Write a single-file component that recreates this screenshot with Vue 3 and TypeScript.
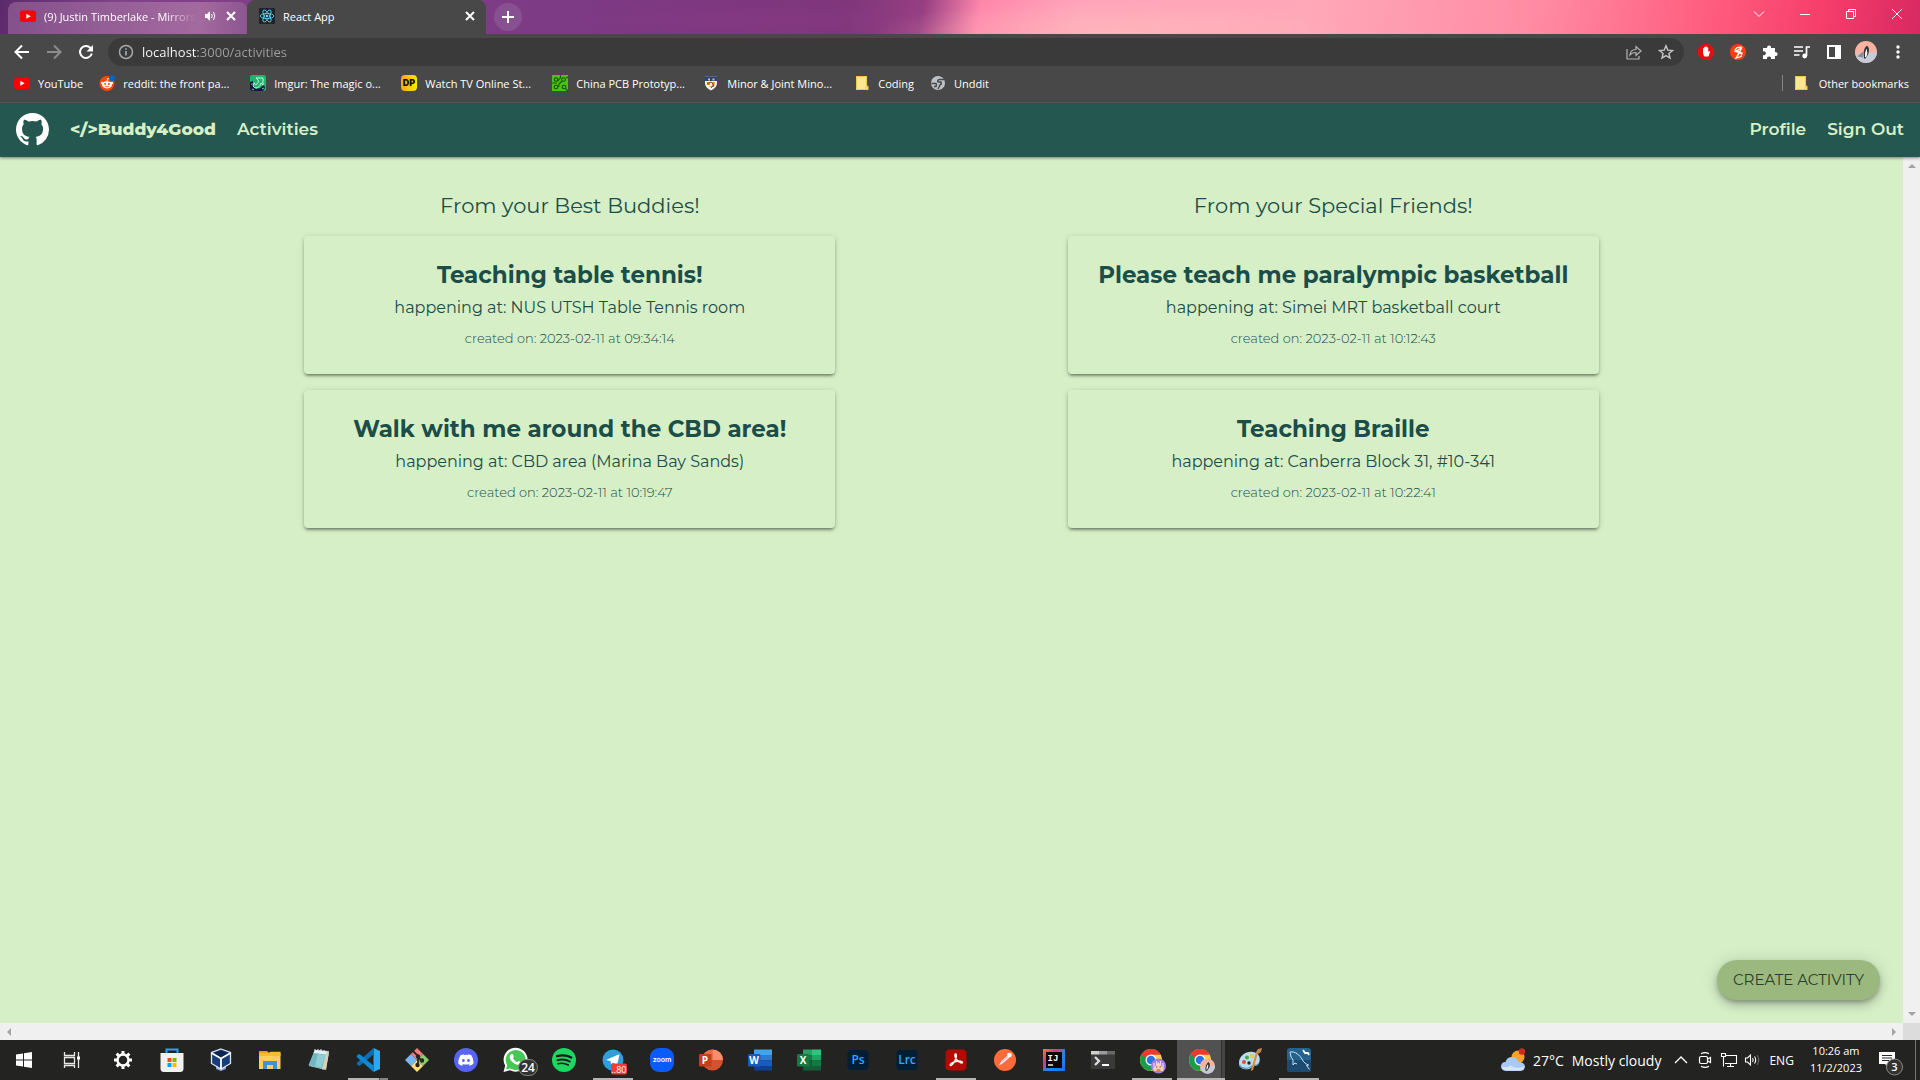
<script setup lang="ts">
interface Bookmark { name: string; art: string }
interface Activity { title: string; place: string; created: string }
interface Feed { heading: string; items: Activity[] }
interface TaskApp { name: string; art: string; state?: 'open' | 'stacked' | 'active' }

const youtube =
  '<rect x="0" y="2.5" width="16" height="11.5" rx="2.5" fill="#f00"/><path d="M6.3 5.7v5l4.4-2.5z" fill="#fff"/>'
const folder =
  '<path d="M2 1h11v10.500h1V15H2z" fill="#ffe591"/><path d="M2 1.500h10.500v10M2.500 1v13.500h11.500M12 14v-3h2v4" fill="none" stroke="#efc94e" stroke-width="1"/>'

const bookmarks: Bookmark[] = [
  { name: 'YouTube', art: youtube },
  {
    name: 'reddit: the front pa...',
    art: '<circle cx="8" cy="8.500" r="7.500" fill="#ff4500"/><ellipse cx="8" cy="9.800" rx="5" ry="3.600" fill="#fff"/><circle cx="3.200" cy="8" r="1.300" fill="#fff"/><circle cx="12.800" cy="8" r="1.300" fill="#fff"/><path d="M8 6.500l.7-3 2.500.6" stroke="#fff" fill="none"/><circle cx="6.100" cy="9" r="1" fill="#ff4500"/><circle cx="9.900" cy="9" r="1" fill="#ff4500"/><path d="M6 11.300q2 1.400 4 0" stroke="#ff4500" fill="none" stroke-width=".8"/><circle cx="13" cy="3" r="3" fill="#0a63c0"/>'
  },
  {
    name: 'Imgur: The magic o...',
    art: '<rect width="16" height="16" rx="2.500" fill="#1bb76e"/><path d="M0 7l3-1v5l3 3 4-1 4-3 1 3-2 3H2.500Q0 16 0 13.500z" fill="#171544"/><path d="M6 3h7v7l-2-2c-1 4-4 5.500-6.500 4.500-2-1-1.500-4 0-4.500 0 2 1.500 2 2.500 1 1-1 1.300-2 1.300-3.700z" fill="#1bb76e" stroke="#d8fff0" stroke-width=".9"/><path d="M1 9.500l1.500-1M2 14l2 1M12 14l2-1" stroke="#d8fff0" stroke-width=".7"/>'
  },
  {
    name: 'Watch TV Online St...',
    art: '<defs><linearGradient id="dp" x1="0" x2="1"><stop stop-color="#fba421"/><stop offset="1" stop-color="#ffea00"/></linearGradient></defs><rect width="16" height="16" rx="4" fill="url(#dp)"/><text x="8" y="11.300" font-family="Inter, sans-serif" font-size="9" font-weight="900" text-anchor="middle" fill="#111">DP</text>'
  },
  {
    name: 'China PCB Prototyp...',
    art: '<rect width="16" height="16" fill="#4cc20a"/><g fill="none" stroke="#14541a" stroke-width="1.100"><circle cx="4" cy="4.500" r="1.800"/><circle cx="11.500" cy="4.500" r="1.800"/><circle cx="4" cy="12" r="1.800"/><circle cx="12" cy="12" r="1.800"/><path d="M5.500 6.500l3-4V0M10 6L7 9v2l-2 1M13.500 13.500L16 16M14 3l2-1M0 8h5"/></g>'
  },
  {
    name: 'Minor & Joint Mino...',
    art: '<path d="M2 1l2 1 2-1 2 1 2-1 2 1 2-1v7q0 5-6 7.500Q2 13 2 8z" fill="#eef1f6"/><path d="M2 1l2 1 2-1 2 1 2-1 2 1 2-1v5H2z" fill="#24457f"/><path d="M5 3.500h2v2H5zM9.500 3.500h2v2h-2z" fill="#f5b56a"/><path d="M4 7h3v3H4zM9 7h3l-1 5H9zM6 11h3v2z" fill="#ea8b2b"/><path d="M4 9l4-2 3 3-3 3" fill="none" stroke="#4b4b55" stroke-width=".9"/>'
  },
  { name: 'Coding', art: folder },
  {
    name: 'Unddit',
    art: '<circle cx="8" cy="8" r="7" fill="#bdc1c6"/><path d="M14 4.500H9.500Q7 5 8 7h3q1 2-1 3l-2 4M1.500 8.500H6q1 1 0 3H4" fill="none" stroke="#484848" stroke-width="1.500"/>'
  }
]

const feeds: Feed[] = [
  {
    heading: 'From your Best Buddies!',
    items: [
      { title: 'Teaching table tennis!', place: 'NUS UTSH Table Tennis room', created: '2023-02-11 at 09:34:14' },
      { title: 'Walk with me around the CBD area!', place: 'CBD area (Marina Bay Sands)', created: '2023-02-11 at 10:19:47' }
    ]
  },
  {
    heading: 'From your Special Friends!',
    items: [
      { title: 'Please teach me paralympic basketball', place: 'Simei MRT basketball court', created: '2023-02-11 at 10:12:43' },
      { title: 'Teaching Braille', place: 'Canberra Block 31, #10-341', created: '2023-02-11 at 10:22:41' }
    ]
  }
]

const chrome =
  '<circle cx="11" cy="12" r="11" fill="#fdd23c"/><path d="M11 12L1.500 6.500A11 11 0 0 1 20.500 6.500H11z" fill="#ea3b2e"/><path d="M1.500 6.500A11 11 0 0 0 11 23l5-8.500-5-2.500z" fill="#1e9a48"/><path d="M1.500 6.500L6.500 15l4-3V6.500L6 4z" fill="#1e9a48"/><path d="M1.500 6.500A11 11 0 0 1 20.500 6.500H11Q7 6.500 6 10z" fill="#ea3b2e"/><circle cx="11" cy="12" r="5.500" fill="#fff"/><circle cx="11" cy="12" r="4.300" fill="#2b74e8"/>'
const adobe = (label: string) =>
  `<rect x="1.500" y="2" width="21" height="20" rx="4" fill="#001e36"/><text x="12" y="16" text-anchor="middle" font-family="Open Sans, sans-serif" font-size="12" font-weight="600" fill="#31a8ff">${label}</text>`

const apps: TaskApp[] = [
  {
    name: 'Settings',
    art: '<g stroke="#fff" fill="none"><circle cx="12" cy="12" r="5.500" stroke-width="2.500"/><path stroke-width="3" d="M12 3v3M12 18v3M3 12h3M18 12h3M5.600 5.600l2.200 2.200M16.200 16.200l2.200 2.200M5.600 18.400l2.200-2.200M16.200 7.800l2.200-2.200"/></g>'
  },
  {
    name: 'Microsoft Store',
    art: '<path d="M6.500 6V1.500h11V6" fill="none" stroke="#22a6f2" stroke-width="2"/><path d="M.5 5h23v15.500q0 3.500-3.500 3.500H4Q.5 24 .5 20.500z" fill="#f1f1f1"/><path d="M7.500 10h4v4h-4z" fill="#f25022"/><path d="M12.500 10h4v4h-4z" fill="#7fba00"/><path d="M7.500 15h4v4h-4z" fill="#00a4ef"/><path d="M12.500 15h4v4h-4z" fill="#ffb900"/>'
  },
  {
    name: 'VirtualBox',
    art: '<path d="M7 17l5 3 5-3v4l-5 2-5-2z" fill="#8ea5cc"/><path d="M12 1l9.500 3.500v11L12 21l-9.500-5.500v-11z" fill="#173d7b" stroke="#dce5f5" stroke-width="1.300"/><path d="M12 2.500l8 3-8 4.500-8-4.500z" fill="#0d2450"/><path d="M2.500 5l9.500 5.500L21.500 5M12 10.500V21" stroke="#fff" stroke-width="1.800" fill="none"/>'
  },
  {
    name: 'File Explorer',
    art: '<path d="M1 3h8l2 2H1z" fill="#e3a200"/><path d="M1 5h21.500v16H1z" fill="#ffcf5c"/><path d="M1 4.800h10l1.500-1h10V8H1z" fill="#f9b932"/><path d="M5 21v-8h14v8h-4v-4H9v4z" fill="#3b93dd"/>'
  },
  {
    name: 'Notepad',
    art: '<path d="M8 2l14 1-3 19-17-4z" fill="#c1ccd0"/><path d="M7.500 2.500L20 4l-5 17L1.500 17z" fill="#6fb6c2"/><path d="M8 2l12 1.500-1 3L6.500 5z" fill="#e2f3f3"/><path d="M20 3l2 2-3 16-4 .5z" fill="#d9d0b5"/><path d="M11 6l8 1-5 13-6-2z" fill="#a8dce1" opacity=".6"/><path d="M8 1v3m3-3v3m3-3v3m3-2v3" stroke="#eee"/>'
  },
  {
    name: 'Visual Studio Code',
    state: 'stacked',
    art: '<path d="M17.500 0L24 3v18l-6.500 3z" fill="#2aa8f2"/><path d="M17.500 0v6.500L3.500 18 1 16.500 .8 15z" fill="#0a6fb5"/><path d="M17.500 24v-6.500L3.500 6 .8 7.500V9z" fill="#0d89d3"/>'
  },
  {
    name: 'Git',
    art: '<path d="M12 0l6 6-6 6-6-6z" fill="#f27c7a"/><path d="M18 6l6 6-6 6-6-6z" fill="#89ce6c"/><path d="M6 6l6 6-6 6-6-6z" fill="#79b6f4"/><path d="M12 12l6 6-6 6-6-6z" fill="#ffe07a"/><g stroke="#252525" stroke-width="1.800" fill="#252525"><path d="M8 3l5 5v9M13 9l4 4" fill="none"/><circle cx="13" cy="8.500" r="1.300"/><circle cx="17" cy="12.500" r="1.300"/><circle cx="12.500" cy="17" r="1.300"/></g>'
  },
  {
    name: 'Discord',
    art: '<circle cx="12" cy="12" r="12" fill="#5865f2"/><path transform="translate(4.300 4.300) scale(.64)" fill="#fff" d="M20.317 4.370a19.800 19.800 0 0 0-4.885-1.515c-.21.375-.45.88-.617 1.275a18.300 18.300 0 0 0-5.487 0c-.16-.39-.4-.9-.617-1.275a19.700 19.700 0 0 0-4.885 1.515C.533 9.046-.32 13.580.1 18.058a19.900 19.900 0 0 0 5.993 3.030c.46-.63.87-1.300 1.226-1.994a13 13 0 0 1-1.872-.892l.37-.29c3.930 1.793 8.180 1.793 12.060 0l.37.29c-.6.350-1.220.645-1.873.892.360.7.770 1.362 1.225 1.993a19.800 19.800 0 0 0 6.002-3.030c.5-5.177-.838-9.674-3.549-13.660zM8.020 15.330c-1.183 0-2.157-1.085-2.157-2.420 0-1.330.955-2.420 2.157-2.420 1.210 0 2.176 1.100 2.157 2.420 0 1.335-.956 2.420-2.157 2.420zm7.975 0c-1.183 0-2.157-1.085-2.157-2.420 0-1.330.955-2.420 2.157-2.420 1.210 0 2.176 1.100 2.157 2.420 0 1.335-.946 2.420-2.157 2.420z"/>'
  },
  {
    name: 'WhatsApp',
    art: '<path d="M.5 24l1.700-6.300A12 12 0 1 1 7 22.300z" fill="#fff"/><path d="M3 21.500l1.200-4.300A10 10 0 1 1 7.300 20.400z" fill="#47c855"/><path d="M8 6c1-.6 1.700-.3 2 .5l.8 2c.2.600-1 1.300-.8 1.700 1 2 2.300 3 4 3.800.6.200 1-1.300 1.700-1l2 1c.8.400.3 2-.6 2.500-3 1.500-9-2-10.300-6.500C6.300 8.300 7 6.800 8 6z" fill="#fff"/><rect x="15.500" y="11.500" width="19" height="16" rx="8" fill="#333" stroke="#888"/><text x="25" y="23.500" text-anchor="middle" font-family="Open Sans, sans-serif" font-size="12" font-weight="600" fill="#fff">24</text>'
  },
  {
    name: 'Spotify',
    art: '<circle cx="12" cy="12" r="12" fill="#1ed760"/><g fill="none" stroke="#1b1b1b" stroke-linecap="round"><path d="M5 8.200q8-2.200 14.300 1.300" stroke-width="2.300"/><path d="M5.500 12.200q6.500-1.800 12.300 1.300" stroke-width="1.900"/><path d="M6 15.800q5.500-1.400 10.300 1.200" stroke-width="1.600"/></g>'
  },
  {
    name: 'Telegram',
    state: 'open',
    art: '<circle cx="12" cy="12" r="10.500" fill="#2ba0dc"/><path d="M5 12l12.500-5.500c.8-.2 1 .3.800 1L16 17.500l-4-3-2 2-.5-3.500z" fill="#fff"/><rect x="10" y="15.500" width="16" height="11" rx="2" fill="#f23c34"/><text x="18" y="24.500" text-anchor="middle" font-family="Open Sans, sans-serif" font-size="9" fill="#fff">..80</text>'
  },
  {
    name: 'Zoom',
    art: '<rect width="24" height="24" rx="9" fill="#0b5cff"/><text x="12" y="14" text-anchor="middle" font-family="Inter, sans-serif" font-size="7" font-weight="600" fill="#fff">zoom</text>'
  },
  {
    name: 'PowerPoint',
    art: '<circle cx="13.500" cy="12" r="10.500" fill="#d35230"/><path d="M13.500 1.500A10.500 10.500 0 0 1 24 12H13.500z" fill="#ff8f6b"/><path d="M13.500 1.500A10.500 10.500 0 0 0 3 12h10.500z" fill="#ed6c47"/><rect y="6" width="12.500" height="12.500" rx="1.200" fill="#c43e1c"/><text x="6" y="16" text-anchor="middle" font-family="Open Sans, sans-serif" font-size="10" font-weight="700" fill="#fff">P</text>'
  },
  {
    name: 'Word',
    art: '<path d="M6 1.500h18V7H6z" fill="#41a5ee"/><path d="M6 7h18v5.500H6z" fill="#2b7cd3"/><path d="M6 12.500h18V18H6z" fill="#185abd"/><path d="M6 18h18v4.500H6z" fill="#103f91"/><rect y="6" width="12.500" height="12.500" rx="1.200" fill="#185abd"/><text x="6" y="16" text-anchor="middle" font-family="Open Sans, sans-serif" font-size="10" font-weight="700" fill="#fff">W</text>'
  },
  {
    name: 'Excel',
    art: '<path d="M6 1.500h9V7H6zM15 7h9v5.500h-9z" fill="#21a366"/><path d="M15 1.500h9V7h-9z" fill="#33c481"/><path d="M6 7h9v5.500H6zM15 12.500h9V18h-9z" fill="#107c41"/><path d="M6 12.500h9V18h9v4.500H6z" fill="#185c37"/><rect y="6" width="12.500" height="12.500" rx="1.200" fill="#107c41"/><text x="6" y="16" text-anchor="middle" font-family="Open Sans, sans-serif" font-size="10" font-weight="700" fill="#fff">X</text>'
  },
  { name: 'Photoshop', art: adobe('Ps') },
  { name: 'Lightroom Classic', art: adobe('Lrc') },
  {
    name: 'Acrobat',
    state: 'open',
    art: '<rect x="1.500" y="1.500" width="21" height="21" rx="4" fill="#b30b00"/><path d="M11.500 6c1.500 0 .8 4-.5 6.500-1.300 2.500-3 5.500-4.500 5-1.300-1 2-3.300 5.500-4s6.500-.3 6.500 1c-.5 1.500-4-.5-6-3-1.500-2-2.300-5.500-1-5.500z" fill="none" stroke="#fff" stroke-width="1.400"/>'
  },
  {
    name: 'Postman',
    art: '<circle cx="12" cy="12" r="11" fill="#ff6c37"/><path d="M6 17.500l2.500-4.500 6-5.500 2 2-6.500 5.500z" fill="#fff"/><circle cx="16.500" cy="7" r="2.300" fill="#fff"/><path d="M9 14l6-5.500" stroke="#ff6c37" stroke-width=".7"/>'
  },
  {
    name: 'IntelliJ IDEA',
    art: '<defs><linearGradient id="ij" x1="0" y1="0" x2="1" y2="1"><stop stop-color="#ff7a36"/><stop offset=".3" stop-color="#d83a86"/><stop offset=".6" stop-color="#1789f5"/><stop offset="1" stop-color="#2769ea"/></linearGradient></defs><rect x="1" y="1" width="22" height="22" fill="url(#ij)"/><rect x="4" y="4" width="16" height="16" fill="#070407"/><text x="5.500" y="13" font-family="Liberation Mono, monospace" font-size="9" font-weight="700" fill="#fff">IJ</text><path d="M6 17h5" stroke="#fff" stroke-width="1.400"/>'
  },
  {
    name: 'Terminal',
    art: '<path d="M0 3h24v18H0z" fill="#3a3a3a"/><path d="M0 3h8v3.500H0z" fill="#cfcfcf"/><path d="M8 3h8v3.500H8z" fill="#9b9b9b"/><path d="M16 3h8v3.500h-8z" fill="#696969"/><path d="M4 9l4 4-4 4" fill="none" stroke="#ddd" stroke-width="2.300"/><path d="M11 17h7" stroke="#fff" stroke-width="2"/>'
  },
  {
    name: 'Google Chrome',
    state: 'open',
    art: chrome + '<circle cx="18.500" cy="18" r="7.500" fill="#a37de0"/><path d="M14 15v7M23 15v7M16.500 13v4M20.500 13v4" stroke="#e9d9fa" stroke-width="1.200"/><path d="M14 20l4.500-6 4.500 6v3h-9z" fill="#f4d9a8"/><path d="M16 19h1.500m2 0H21m-4.500 3h4" stroke="#da6651" stroke-width="1.500"/>'
  },
  {
    name: 'Google Chrome – React App',
    state: 'active',
    art: chrome + '<circle cx="18.500" cy="18" r="7.500" fill="#f5b3a2"/><path d="M11 19.500l15-2A7.500 7.500 0 0 1 11 19z" fill="#c4c9d8"/><path d="M16.500 22.500q-.5-6 3-8.500 2.500 2 .5 6l-2 3z" fill="#333"/><path d="M17.500 22q-.5-3 1.500-6 .8 2-.5 5z" fill="#fff"/>'
  },
  {
    name: 'Paint',
    art: '<path d="M1 15C1 8 8 3 15 4c6 1 8 6 6 11-2 4-5 2-7 4-3 4-13 3-13-4z" fill="#b9def0"/><path d="M1.500 17c2 4 8 4 11 2 3-3 6 0 8.500-4" fill="none" stroke="#5d9abd" stroke-width="1.300"/><circle cx="6" cy="14" r="2" fill="#e34b40"/><circle cx="9" cy="9.500" r="2" fill="#45a847"/><circle cx="14" cy="8" r="2" fill="#f4c53b"/><circle cx="11" cy="15" r="1.700" fill="#252525"/><path d="M20 5l-5 17-2 1 .5-3L18 4z" fill="#dd8e3a"/><path d="M18 4l2-3 4-1-1 4-3 2z" fill="#b98656"/>'
  },
  {
    name: 'MySQL Workbench',
    state: 'open',
    art: '<rect y="0" width="24" height="24" rx="3" fill="#24638e"/><path d="M0 12h24v9q0 3-3 3H3q-3 0-3-3z" fill="#1c4b71"/><path d="M3 4c5-1 10 3 12.500 8 1.500 3 4 4 6 5l-2 .5 3 4M3 4l1 5 2 3v5l2-2 2 1" fill="none" stroke="#cfe2ee" stroke-width="1"/><path d="M16 2l2 3h3l1 2" fill="none" stroke="#fff" stroke-width="1.800"/>'
  }
]
</script>

<template>
  <div class="screen">
    <header class="browser">
      <div class="tabs">
        <div class="tab back">
          <svg class="i16" viewBox="0 0 16 16" v-html="youtube"></svg>
          <span class="tab-name faded">(9) Justin Timberlake - Mirrors</span>
          <svg class="speaker" viewBox="0 0 12 12"><path d="M1 4h2l3-3v10L3 8H1z" fill="#fff" /><path d="M7.500 4q1.500 2 0 4M9.500 2q2.500 4 0 8" stroke="#fff" fill="none" /></svg>
          <button class="close" aria-label="Close tab"><svg viewBox="0 0 10 10"><path d="M1 1l8 8M9 1L1 9" /></svg></button>
        </div>
        <div class="tab front">
          <svg class="i16" viewBox="0 0 16 16"><rect width="16" height="16" rx="1" fill="#20232a" /><g fill="none" stroke="#61dafb" stroke-width=".8"><ellipse cx="8" cy="8" rx="6.800" ry="2.600" /><ellipse cx="8" cy="8" rx="6.800" ry="2.600" transform="rotate(60 8 8)" /><ellipse cx="8" cy="8" rx="6.800" ry="2.600" transform="rotate(120 8 8)" /></g><circle cx="8" cy="8" r="1.300" fill="#61dafb" /></svg>
          <span class="tab-name">React App</span>
          <button class="close" aria-label="Close tab"><svg viewBox="0 0 10 10"><path d="M1 1l8 8M9 1L1 9" /></svg></button>
        </div>
        <button class="new-tab" aria-label="New tab"><svg viewBox="0 0 12 12"><path d="M6 0v12M0 6h12" stroke="#fff" stroke-width="2" /></svg></button>
        <div class="window-controls">
          <button aria-label="Search tabs"><svg viewBox="0 0 12 12"><path d="M1 3.500l5 5 5-5" /></svg></button>
          <button aria-label="Minimise"><svg viewBox="0 0 12 12"><path d="M1 6.500h10" /></svg></button>
          <button aria-label="Restore"><svg viewBox="0 0 12 12"><path d="M1.500 3.500h7v7h-7zM3.500 3.500v-2h7v7h-2" /></svg></button>
          <button aria-label="Close window"><svg viewBox="0 0 12 12"><path d="M1 1l10 10M11 1L1 11" /></svg></button>
        </div>
      </div>

      <div class="toolbar">
        <button class="tool" aria-label="Back"><svg viewBox="0 0 16 16"><path d="M15 8H2.500M8 1.500L1.500 8 8 14.500" fill="none" stroke="#fff" stroke-width="2" /></svg></button>
        <button class="tool" aria-label="Forward"><svg viewBox="0 0 16 16"><path d="M1 8h12.500M8 1.500L14.500 8 8 14.500" fill="none" stroke="#8c8c8c" stroke-width="2" /></svg></button>
        <button class="tool" aria-label="Reload"><svg viewBox="0 0 16 16"><path d="M13.800 9.500A6 6 0 1 1 12.500 4L14 5.500" fill="none" stroke="#fff" stroke-width="2" /><path d="M15 1v6.500H8.500z" fill="#fff" /></svg></button>
        <div class="address">
          <svg class="i16" viewBox="0 0 16 16"><g fill="none" stroke="#a5a8ab" stroke-width="1.500"><circle cx="8" cy="8" r="6.500" /><path d="M8 7v4.500M8 4.200v1.600" stroke-width="1.700" /></g></svg>
          <input class="url" type="text" aria-label="Address" value="localhost:3000/activities" />
          <svg class="i16" viewBox="0 0 16 16"><path d="M1 5v10h12v-3M4 11q.5-5.500 6-5.500V2.500l5 4.500-5 4.500V8.500Q6 8.500 4 11z" fill="none" stroke="#b4b4b4" stroke-width="1.200" /></svg>
          <svg class="i16" viewBox="0 0 16 16"><path d="M8 1.800l1.800 4.300 4.700.4-3.600 3 1.100 4.600L8 11.600l-4 2.500 1.100-4.600-3.600-3 4.700-.4z" fill="none" stroke="#c6c6c6" stroke-width="1.400" /></svg>
        </div>
        <div class="extensions">
          <button class="tool" aria-label="AdBlock"><svg viewBox="0 0 16 16"><path d="M4.700 0h6.600L16 4.700v6.600L11.300 16H4.700L0 11.300V4.700z" fill="#e01010" /><path d="M5 8V4.500q.7-1 1.200 0V3.200q.7-1 1.300 0v-.5q.8-1 1.400 0v1q.8-.8 1.300.2V8l1-1q1.300 0 .8 1L10.500 12.500H6.500Q5 11 5 8z" fill="#fff" /></svg></button>
          <button class="tool" aria-label="Search by image"><svg viewBox="0 0 16 16"><circle cx="8" cy="8" r="8" fill="#ff3c10" /><path d="M11.500 3L7 3.500 5 6l5 2-4 6 5-1.500 1-3.500-6.500-1.500L12 3.500 7 12" fill="none" stroke="#fff" stroke-width="1.300" /></svg></button>
          <button class="tool" aria-label="Extensions"><svg viewBox="0 0 16 16"><path d="M1 4h4.200a2 2 0 1 1 3.800 0H13v4.200a2 2 0 1 1 0 3.800V15H9a2 2 0 1 0-3.900 0H1v-4a2 2 0 1 0 0-3.600z" fill="#fff" /></svg></button>
          <button class="tool" aria-label="Media controls"><svg viewBox="0 0 16 16"><path d="M0 3h9M0 7h9M0 11h5.500M12.500 12V3H16" fill="none" stroke="#fff" stroke-width="1.700" /><circle cx="10.700" cy="12" r="2.400" fill="#fff" /></svg></button>
          <button class="tool" aria-label="Side panel"><svg viewBox="0 0 16 16"><path d="M1 1h14v14H1zM3 3v10h6V3z" fill="#fff" fill-rule="evenodd" /></svg></button>
          <button class="tool profile" aria-label="Profile"><svg viewBox="0 0 22 22"><circle cx="11" cy="11" r="11" fill="#fab3a3" /><path d="M0 13l22-2A11 11 0 0 1 .2 13z" fill="#c6cbda" /><path d="M2 15.500l6-5v6z" fill="#858d96" /><path d="M9 17.500Q7.500 8 12 4.500q3.500 3 1 9l-2.500 4z" fill="#303236" /><path d="M10 16.500q-.5-5 1.500-9 1.500 4 0 8z" fill="#fff" /></svg></button>
          <button class="tool" aria-label="Menu"><svg viewBox="0 0 16 16" fill="#fff"><circle cx="8" cy="3" r="1.700" /><circle cx="8" cy="8" r="1.700" /><circle cx="8" cy="13" r="1.700" /></svg></button>
        </div>
      </div>

      <nav class="bookmarks" aria-label="Bookmarks">
        <a v-for="mark in bookmarks" :key="mark.name" href="#" class="bookmark" :class="{ truncated: mark.name.endsWith('...') }">
          <svg class="i16" viewBox="0 0 16 16" v-html="mark.art"></svg>{{ mark.name }}
        </a>
        <a href="#" class="bookmark other"><svg class="i16" viewBox="0 0 16 16" v-html="folder"></svg>Other bookmarks</a>
      </nav>
    </header>

    <nav class="site-nav" aria-label="Site">
      <a href="#" aria-label="GitHub"><svg class="github" viewBox="0 0 16 16"><path fill="#fff" d="M8 0C3.580 0 0 3.580 0 8c0 3.540 2.290 6.530 5.470 7.590.4.070.55-.17.55-.38 0-.19-.01-.82-.01-1.490-2.010.37-2.530-.49-2.690-.94-.09-.23-.48-.94-.82-1.130-.28-.15-.68-.52-.01-.53.630-.01 1.080.58 1.230.82.720 1.210 1.870.870 2.330.660.070-.52.280-.870.510-1.070-1.780-.2-3.640-.890-3.640-3.950 0-.870.310-1.590.820-2.150-.080-.2-.360-1.020.080-2.120 0 0 .670-.210 2.200.820.640-.180 1.320-.270 2-.270s1.360.090 2 .270c1.530-1.040 2.200-.820 2.200-.820.440 1.100.160 1.920.080 2.120.510.560.820 1.270.820 2.150 0 3.070-1.870 3.750-3.650 3.950.290.250.540.730.540 1.480 0 1.070-.010 1.930-.010 2.200 0 .210.150.460.550.380A8.010 8.010 0 0 0 16 8c0-4.420-3.580-8-8-8z" /></svg></a>
      <a href="#" class="brand">&lt;/&gt;Buddy4Good</a>
      <a href="#">Activities</a>
      <a href="#" class="push">Profile</a>
      <a href="#">Sign Out</a>
    </nav>

    <div class="viewport">
      <main class="page">
        <section v-for="feed in feeds" :key="feed.heading" class="feed">
          <h1>{{ feed.heading }}</h1>
          <article v-for="item in feed.items" :key="item.title" class="card">
            <h2>{{ item.title }}</h2>
            <p class="place">happening at: {{ item.place }}</p>
            <p class="created">created on: {{ item.created }}</p>
          </article>
        </section>
        <button class="create">CREATE ACTIVITY</button>
      </main>
      <div class="bar vertical">
        <svg viewBox="0 0 8 8"><path d="M4 2L8 6H0z" fill="#a3a3a3" /></svg>
        <svg viewBox="0 0 8 8"><path d="M0 2h8L4 6z" fill="#a3a3a3" /></svg>
      </div>
      <div class="bar horizontal">
        <svg viewBox="0 0 8 8"><path d="M6 0v8L2 4z" fill="#a3a3a3" /></svg>
        <svg viewBox="0 0 8 8"><path d="M2 0v8l4-4z" fill="#a3a3a3" /></svg>
      </div>
      <div class="corner"></div>
    </div>

    <footer class="taskbar">
      <div class="system">
        <button class="task" aria-label="Start"><svg viewBox="0 0 24 24"><path d="M4 6.500l7-1v6H4zM12 5.300L20 4v7.500h-8zM4 12.500h7v6l-7-1zM12 12.500h8V20l-8-1.300z" fill="#fff" /></svg></button>
        <button class="task" aria-label="Task view"><svg viewBox="0 0 24 24"><path d="M4.500 4v3.500h10V4M4.500 9.500h10v6h-10zM4.500 20v-2.500h10V20M18.500 4v16" fill="none" stroke="#e8e8e8" stroke-width="1.300" /><path d="M17 8.500h3v3h-3z" fill="#fff" /></svg></button>
      </div>
      <div class="apps">
        <button v-for="app in apps" :key="app.name" class="task" :class="app.state" :aria-label="app.name">
          <svg viewBox="0 0 24 24" v-html="app.art"></svg>
        </button>
      </div>
      <div class="tray">
        <button class="weather">
          <svg viewBox="0 0 24 24"><circle cx="17" cy="9" r="6.500" fill="#f7a128" /><circle cx="21" cy="3.500" r="3.200" fill="#cc2b20" /><path d="M5 23q-5-.5-5-5 .5-4 4.500-4Q6 9 11 9q5 0 6.500 5 6 0 6.500 4.500-.5 4.500-5 4.500z" fill="#a9c9f5" /><path d="M5 22.500q-4-.5-4.500-4 5 2 9-1 6 4 14 1-.5 3.500-4.500 4z" fill="#d6e5fb" /></svg>
          <span>27°C</span><span>Mostly cloudy</span>
        </button>
        <button aria-label="Hidden icons"><svg class="i16" viewBox="0 0 16 16"><path d="M2 11l6-6 6 6" fill="none" stroke="#fff" stroke-width="1.400" /></svg></button>
        <button aria-label="Meet now"><svg class="i16" viewBox="0 0 16 16"><g fill="none" stroke="#fff" stroke-width="1.200"><rect x="2.500" y="4.500" width="8" height="7" rx="1.500" /><path d="M10.500 7l3-1.500v5l-3-1.500M4 1.800Q8-.5 12 1.800M4 14.200q4 2.300 8 0" /></g></svg></button>
        <button aria-label="Network"><svg class="i16" viewBox="0 0 16 16"><path d="M5 3.500h10.500v8H4M9.500 11.500v3M6 14.500h7M.5 1.500h4v3h-4zM2.500 4.500v10" fill="none" stroke="#fff" stroke-width="1.100" /></svg></button>
        <button aria-label="Volume"><svg class="i16" viewBox="0 0 16 16"><path d="M.5 6h2l3-3v10l-3-3h-2zM7.500 6q1.500 2 0 4M9.500 4.500q2.500 3.500 0 7" fill="none" stroke="#fff" stroke-width="1.100" /><path d="M12 3q3.500 5 0 10" fill="none" stroke="#777" /></svg></button>
        <button class="language">ENG</button>
        <button class="clock"><span>10:26 am</span><span>11/2/2023</span></button>
        <button class="notes" aria-label="3 notifications"><svg viewBox="0 -4 26 26"><path d="M1 1h16v12h-6v4l-4-4H1z" fill="#fff" /><path d="M4 4.500h10M4 7h10M4 9.500h7" stroke="#252525" /><circle cx="16.500" cy="16" r="8" fill="#333" stroke="#8a8a8a" /><text x="16.500" y="20" text-anchor="middle" font-family="Open Sans, sans-serif" font-size="11" font-weight="600" fill="#fff">3</text></svg></button>
      </div>
    </footer>
  </div>
</template>

<style>
body { margin: 0; }
</style>

<style scoped>
.screen {
  display: flex;
  flex-direction: column;
  min-height: 100vh;
  font-family: "Segoe UI", "Open Sans", "Noto Sans", sans-serif;
  font-size: 11px;
}
button {
  display: flex;
  align-items: center;
  justify-content: center;
  padding: 0;
  border: 0;
  background: none;
  color: inherit;
  font: inherit;
}
a { color: inherit; text-decoration: none; }
svg { display: block; flex: none; overflow: visible; }
.i16 { width: 16px; height: 16px; }

.browser { background: #484848; color: #fff; border-bottom: 1px solid #5e5a5d; }
.tabs {
  display: flex;
  height: 34px;
  padding-left: 8px;
  background:
    radial-gradient(ellipse 200px 16px at 40% 60%, #8b3c8466, transparent),
    radial-gradient(ellipse 240px 30px at 58% 90%, #ffc0bc88, transparent),
    linear-gradient(100deg, #5d2a6b 0, #80428a 6%, #7d3a85 30%, #7f367b 44%, #973f83 48%, #ff87ab 51%, #ffa4ba 56%, #ffa8b8 68%, #ff8ba3 80%, #ff5c7f 89%, #f53d6a 95%, #d82961 100%);
}
.tab { display: flex; align-items: center; box-sizing: border-box; width: 239px; padding: 0 11px 2px 12px; border-radius: 8px 8px 0 0; }
.back { margin-top: 2px; background: linear-gradient(90deg, #84518c, #a36a9f 80%, #8d568f); padding-bottom: 4px; }
.front { background: #484848; }
.tab-name { flex: 1; margin-left: 8px; white-space: nowrap; overflow: hidden; }
.faded { mask-image: linear-gradient(90deg, #000 80%, transparent); }
.speaker { width: 12px; height: 12px; margin: 0 10px 0 8px; }
.close svg { width: 10px; height: 10px; fill: none; stroke: #fff; stroke-width: 2; }
.new-tab { width: 28px; height: 28px; margin: 3px 0 0 8px; border-radius: 50%; background: #875090; }
.new-tab svg { width: 12px; height: 12px; }
.window-controls { display: flex; margin-left: auto; height: 28px; }
.window-controls button { width: 46px; }
.window-controls svg { width: 12px; height: 12px; fill: none; stroke: #fff; }

.toolbar { display: flex; align-items: center; gap: 16px; height: 36px; padding: 0 14px; }
.tool svg { width: 16px; height: 16px; }
.address { display: flex; align-items: center; flex: 1; gap: 16px; height: 28px; margin: 0 -2px; padding: 0 10px; border-radius: 14px; background: #3a3a3a; }
.url {
  flex: 1;
  min-width: 0;
  margin-left: -8px;
  padding: 0;
  border: 0;
  outline: 0;
  font: 13px/20px "Segoe UI", "Open Sans", "Noto Sans", sans-serif;
  background: linear-gradient(90deg, #fff 56px, #a0a0a0 56px);
  background-clip: text;
  -webkit-text-fill-color: transparent;
}
.extensions { display: flex; align-items: center; gap: 16px; }
.profile { margin: 0 -3px; }
.profile svg { width: 22px; height: 22px; }

.bookmarks { display: flex; align-items: center; gap: 16px; height: 26px; padding: 0 11px 6px 14px; white-space: nowrap; }
.bookmark { display: flex; align-items: center; gap: 8px; }
.truncated { min-width: 135px; }
.other { gap: 10px; margin-left: auto; padding-left: 10px; border-left: 1px solid #858585; }

.site-nav {
  position: relative;
  z-index: 1;
  display: flex;
  align-items: center;
  gap: 21px;
  box-sizing: border-box;
  height: 54px;
  padding: 0 16px 2px;
  background: #24574f;
  color: #d7efc7;
  font: 600 17px/24px Montserrat, Inter, sans-serif;
  box-shadow: 0 1px 3px #0007;
}
.github { width: 33px; height: 33px; }
.brand { font-weight: 800; }
.push { margin-left: auto; }

.viewport { display: grid; flex: 1; grid-template: 1fr 17px / 1fr 17px; }
.page {
  position: relative;
  display: grid;
  grid-template-columns: 1fr 1fr;
  column-gap: 18%;
  align-content: start;
  padding: 35px 16% 64px;
  background: #d6efc7;
  color: #1b4d49;
  font-family: Montserrat, Inter, sans-serif;
  text-align: center;
}
h1, h2, p { margin: 0; }
.feed { display: flex; flex-direction: column; gap: 16px; }
h1 { font-size: 21px; line-height: 28px; font-weight: 400; }
.card { padding: 23px 16px 24px; border-radius: 4px; box-shadow: 0 3px 3px -2px #0005, 0 2px 3px #0003, 0 1px 6px #0002; }
h2 { font-size: 23px; line-height: 32px; font-weight: 700; }
.place { margin-top: 5px; font-size: 16px; line-height: 24px; }
.created { margin-top: 6px; font-size: 13px; line-height: 24px; font-weight: 300; }
.create {
  position: absolute;
  right: 23px;
  bottom: 23px;
  height: 40px;
  padding: 0 16px;
  border-radius: 20px;
  background: #9bb97e;
  color: #2b3d28;
  font: 15px/24px Montserrat, Inter, sans-serif;
  box-shadow: 0 3px 5px -1px #0004, 0 6px 10px #0002, 0 1px 18px #0002;
}
.bar { display: flex; justify-content: space-between; align-items: center; background: #f0f0f0; }
.bar svg { width: 8px; height: 8px; }
.vertical { flex-direction: column; padding: 5px 0; }
.horizontal { padding: 0 5px; }
.corner { background: #dcdcdc; }

.taskbar { display: flex; height: 40px; background: #232322; color: #fff; }
.system, .apps, .tray { display: flex; }
.apps { gap: 1px; margin-left: 3px; }
.task { box-sizing: border-box; width: 48px; height: 40px; }
.task svg { width: 24px; height: 24px; }
.open, .stacked { background: linear-gradient(#b5b5b5, #b5b5b5) center bottom / 40px 2px no-repeat; }
.stacked { background-image: linear-gradient(90deg, #b5b5b5 31px, #555 31px 32px, #858585 32px); }
.active { background: linear-gradient(#b5b5b5, #b5b5b5) bottom / 100% 2px no-repeat, linear-gradient(90deg, #515151 44px, #303030 44px 45px, #454545 45px); }
.tray { align-items: center; gap: 8px; margin-left: auto; padding-right: 4px; }
.weather { gap: 8px; margin-right: 4px; font-size: 14px; }
.weather svg { width: 24px; height: 24px; }
.language { font-size: 12px; }
.clock { flex-direction: column; margin: 0 8px; padding-bottom: 2px; line-height: 17px; }
.notes { padding-right: 11px; border-right: 1px solid #777; height: 40px; }
.notes svg { width: 26px; height: 26px; }
</style>
